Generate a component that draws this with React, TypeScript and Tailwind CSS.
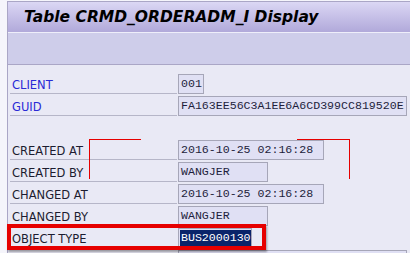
import React from "react";

type Row = { label: string; value?: string; w: number; blue?: boolean; sel?: boolean; empty?: boolean };

const rows: Row[] = [
  { label: "CLIENT", value: "001", w: 26, blue: true },
  { label: "GUID", value: "FA163EE56C3A1EE6A6CD399CC819520E", w: 229, blue: true },
  { label: "", w: 0, empty: true },
  { label: "CREATED AT", value: "2016-10-25 02:16:28", w: 146 },
  { label: "CREATED BY", value: "WANGJER", w: 90 },
  { label: "CHANGED AT", value: "2016-10-25 02:16:28", w: 146 },
  { label: "CHANGED BY", value: "WANGJER", w: 90 },
  { label: "OBJECT TYPE", value: "BUS2000130", w: 74, sel: true },
  { label: "", value: "", w: 229 },
];

export default function App() {
  return (
    <div className="relative w-[410px] h-[253px] overflow-hidden bg-[#f5f5fb] flex">
      <div className="w-[7px] shrink-0" />
      <div className="flex-1 flex flex-col mt-[1px] border-l border-t border-[#aaa6c6] bg-[#e9e9f5]">
        <div className="h-[30px] shrink-0 flex items-center pl-[16px] bg-gradient-to-b from-[#dbd7f4] to-[#b1a9da]">
          <span
            className="text-[15.5px] font-bold italic text-black leading-none mt-[1px]"
            style={{ fontFamily: '"DejaVu Sans", sans-serif' }}
          >
            Table CRMD_ORDERADM_I Display
          </span>
        </div>
        <div className="h-[1px] bg-[#eeeefa] shrink-0" />
        <div className="h-[32px] bg-[#cecdea] border-b border-[#aaa6c6] shrink-0" />
        <div className="flex flex-col pt-[7px]">
          {rows.map((r, i) =>
            r.empty ? (
              <div key={i} className="h-[22px] shrink-0" />
            ) : (
              <div key={i} className="flex h-[22px] shrink-0">
                <div
                  className={
                    "w-[167px] ml-[2px] border-b border-[#b6b6c8] flex items-center pt-[7px] pl-[2px] text-[11.5px] " +
                    (r.blue ? "text-[#2a2ad6]" : "text-[#1c1c30]")
                  }
                  style={{ fontFamily: '"DejaVu Sans", sans-serif' }}
                >
                  {r.label}
                </div>
                <div
                  className="ml-[1px] mt-[2px] h-[20px] border border-[#a6a6b8] bg-[#e0e0f4] px-[1px] flex items-center text-[11.6px] text-[#1e1e3c] whitespace-nowrap overflow-hidden"
                  style={{ width: r.w, fontFamily: '"Liberation Mono", monospace' }}
                >
                  {r.sel ? (
                    <span className="bg-[#0a246a] text-white px-[1px] leading-[16px]">{r.value}</span>
                  ) : (
                    <span className="px-[1px]">{r.value}</span>
                  )}
                </div>
              </div>
            )
          )}
        </div>
      </div>

      {/* red annotations */}
      <div className="absolute left-[89px] top-[139px] w-[52px] h-[40px] border-solid border-t-[1px] border-l-[1px] border-t-[#e60000] border-l-[#e60000]" />
      <div className="absolute left-[297px] top-[139px] w-[53px] h-[40px] border-solid border-t-[1px] border-r-[1px] border-t-[#e60000] border-r-[#e60000]" />
      <div className="absolute left-[7px] top-[224px] w-[259px] h-[26px] border-[4px] border-solid border-[#e60000] shadow-[1px_2px_2px_rgba(0,0,0,0.35)]" />
    </div>
  );
}
